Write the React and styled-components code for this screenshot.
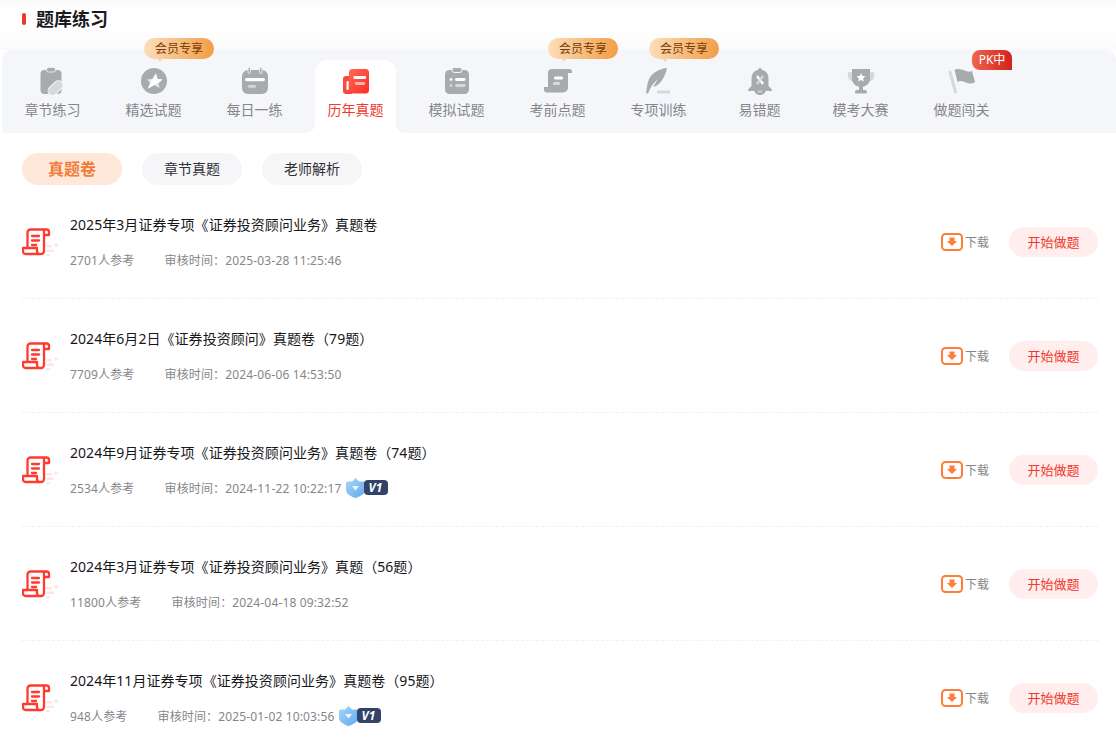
import React from "react";
import styled, { createGlobalStyle } from "styled-components";

const GlobalStyle = createGlobalStyle`
  html, body {
    margin: 0;
    padding: 0;
    background: #fff;
    font-family: "Noto Sans", "Noto Sans CJK SC", sans-serif;
  }
  * { box-sizing: border-box; }
`;

const G = "#a7abae";
const L = "#d6d8da";

const ClipIcon = () => (
  <svg width="28" height="28" viewBox="0 0 28 28">
    <rect x="1.5" y="3" width="21" height="24" rx="4" fill={G} />
    <rect x="7.5" y="0.5" width="9" height="4.5" rx="2" fill={G} stroke="#f5f6fa" strokeWidth="0.8" />
    <rect x="13" y="13" width="9" height="17" rx="4.5" transform="rotate(45 17.5 20)" fill={L} stroke="#f5f6fa" strokeWidth="1" />
  </svg>
);
const StarIcon = () => (
  <svg width="28" height="28" viewBox="0 0 28 28">
    <circle cx="14" cy="14" r="13" fill={G} />
    <path d="M16 6.5 L17.5 12 L22.5 12.5 L18.5 16.5 L19.5 21 L14.5 18 L8 21.5 L10 15.5 L7 12.5 L12.5 12 Z" fill="#e8e9eb" />
    <path d="M16 6.5 L17.5 12 L22.5 12.5 L14.5 18 L8 21.5 L12.5 12 Z" fill="#fff" />
  </svg>
);
const CalIcon = () => (
  <svg width="28" height="28" viewBox="0 0 28 28">
    <rect x="1" y="3" width="26" height="24" rx="6" fill={G} />
    <rect x="7" y="0.5" width="2.4" height="6" rx="1.2" fill={G} stroke="#f5f6fa" strokeWidth="0.8" />
    <rect x="18.6" y="0.5" width="2.4" height="6" rx="1.2" fill={G} stroke="#f5f6fa" strokeWidth="0.8" />
    <rect x="4" y="11" width="20" height="3.2" rx="1.6" fill="#fff" />
    <rect x="7" y="18" width="8" height="2.8" rx="1.4" fill={L} />
  </svg>
);
const BookIcon = () => (
  <svg width="26" height="25" viewBox="0 0 26 25">
    <defs>
      <linearGradient id="bookGrad" x1="0" y1="0" x2="1" y2="1">
        <stop offset="0" stopColor="#ff6a55" />
        <stop offset="1" stopColor="#ff2b24" />
      </linearGradient>
    </defs>
    <path d="M7 7 H3 a3 3 0 0 0 -3 3 V22 a3 3 0 0 0 3 3 H9 V7 Z" fill="#fa4a40" />
    <rect x="3.5" y="12" width="2.2" height="9" rx="1.1" fill="#fff" />
    <rect x="6" y="0" width="20" height="24.5" rx="3.5" fill="url(#bookGrad)" />
    <rect x="10.5" y="7" width="12.5" height="3" rx="1" fill="#fff" />
    <rect x="12" y="13" width="10" height="3" rx="1" fill="#ffb3ac" />
  </svg>
);
const TestIcon = () => (
  <svg width="28" height="28" viewBox="0 0 28 28">
    <rect x="2" y="3" width="24" height="24" rx="4.5" fill={G} />
    <rect x="9" y="0.5" width="10" height="5" rx="2.2" fill={G} stroke="#f5f6fa" strokeWidth="1" />
    <circle cx="8" cy="12.5" r="1.4" fill="#fff" />
    <rect x="12" y="11" width="10.5" height="3" rx="1.4" fill="#fff" />
    <circle cx="8" cy="18.5" r="1.4" fill={L} />
    <rect x="12" y="17" width="10.5" height="3" rx="1.4" fill={L} />
  </svg>
);
const ScrollIcon = () => (
  <svg width="28" height="24" viewBox="0 0 28 24">
    <path d="M4 4 a4 4 0 0 1 4 -4 H25 a3 3 0 0 1 3 3 V4 H24 V18.5 a5 5 0 0 1 -5 5 H3 a3 3 0 0 1 -3 -3 V18 H4 Z" fill={G} />
    <rect x="10" y="7.5" width="9" height="3" rx="1.2" fill="#fff" />
    <rect x="9" y="13" width="7" height="3" rx="1.2" fill={L} />
  </svg>
);
const QuillIcon = () => (
  <svg width="26" height="26" viewBox="0 0 26 26">
    <path d="M21 0 C12 1 4 6 2 14 C1 18 0.5 22 0 25 L2 25.5 C4 20 7 15 12 11 L7 19 C13 18 19 10 21 0 Z" fill={G} />
    <rect x="11" y="22.5" width="13" height="3" rx="0.5" fill={L} />
  </svg>
);
const BellIcon = () => (
  <svg width="26" height="28" viewBox="0 0 26 28">
    <path d="M13 0.5 L15.5 3 C19.5 4 21.5 7.5 21.5 12 V19 L25 22.5 a1 1 0 0 1 -1 1.5 H18.5 a5.5 4 0 0 1 -11 0 H2 a1 1 0 0 1 -1 -1.5 L4.5 19 V12 C4.5 7.5 6.5 4 10.5 3 Z" fill={G} />
    <path d="M10 9 L16 17" stroke="#fff" strokeWidth="2.4" />
    <path d="M16 9 L10 17" stroke={L} strokeWidth="2.4" />
    <ellipse cx="13" cy="24.6" rx="2.6" ry="1.4" fill="#c7c9cc" />
  </svg>
);
const TrophyIcon = () => (
  <svg width="28" height="26" viewBox="0 0 28 26">
    <path d="M5 4 H1 C0 10 2 13 7 14 Z M23 4 H27 C28 10 26 13 21 14 Z" fill={L} />
    <path d="M5 1 H23 V11 C23 16 18 19 14 19 C10 19 5 16 5 11 Z" fill={G} />
    <rect x="12" y="18" width="4" height="4.5" fill={G} />
    <rect x="8" y="22" width="12" height="3.5" rx="1.6" fill={G} />
    <path d="M14 5 L15.3 8 L18.5 8.3 L16.1 10.4 L16.8 13.6 L14 11.9 L11.2 13.6 L11.9 10.4 L9.5 8.3 L12.7 8 Z" fill="#fff" />
  </svg>
);
const FlagIcon = () => (
  <svg width="28" height="26" viewBox="0 0 28 26">
    <path d="M2 4 L7.5 24" stroke={L} strokeWidth="3" strokeLinecap="round" />
    <path d="M6.5 1.5 C11 0 15 1.5 18 3 C20.5 4 22 4 24 3 L27 14 C24 16 21 16 18 14.5 C15 13 12 12.5 9.5 14 Z" fill={G} />
  </svg>
);
const PaperIcon = () => (
  <svg width="36" height="30" viewBox="0 0 36 30">
    <rect x="24" y="17" width="6" height="2.6" rx="1.3" fill="#fde6e3" />
    <circle cx="34" cy="17" r="1.8" fill="#fde6e3" />
    <rect x="24" y="21.5" width="8" height="2.6" rx="1.3" fill="#fde6e3" />
    <rect x="24" y="26" width="4" height="2.4" rx="1.2" fill="#fde6e3" />
    <g fill="none" stroke="#ff3a2e" strokeWidth="2.3" strokeLinejoin="round" strokeLinecap="round">
      <path d="M5.5 19.5 V4.5 a3 3 0 0 1 3 -3 H24.5 a2.5 2.5 0 0 1 2.5 2.5 V7 H22 V23 a3 3 0 0 1 -3 3 H3.5 a2.5 2.5 0 0 1 -2.5 -2.5 V20 H15 V23 a3 3 0 0 0 3 3" />
      <path d="M22 6 V2" />
      <path d="M10 8 H17 M10 12.5 H17 M10 17 H14" />
    </g>
  </svg>
);
const DownIcon = () => (
  <svg width="22" height="18" viewBox="0 0 22 18">
    <rect x="1" y="1" width="20" height="16" rx="3.5" fill="none" stroke="#ff7d38" strokeWidth="2" />
    <path d="M8.5 4.5 H13.5 V8 H16 L11 13 L6 8 H8.5 Z" fill="#ff7d38" />
  </svg>
);
const ShieldIcon = () => (
  <svg width="19" height="20" viewBox="0 0 19 20">
    <defs>
      <linearGradient id="shieldGrad" x1="0" y1="0" x2="1" y2="1">
        <stop offset="0" stopColor="#a9d6f8" />
        <stop offset="1" stopColor="#5ea9ee" />
      </linearGradient>
    </defs>
    <path d="M9.5 0 L13 3.5 H17 a2 2 0 0 1 2 2 V12 C19 16 14 18.5 9.5 20 C5 18.5 0 16 0 12 V5.5 a2 2 0 0 1 2 -2 H6 Z" fill="url(#shieldGrad)" />
    <path d="M6 8 H13 L9.5 12.5 Z" fill="#eef7fe" />
  </svg>
);

const Page = styled.div`
  width: 1116px;
  height: 748px;
  overflow: hidden;
  background: #fff;
`;
const Header = styled.div`
  height: 50px;
  background: linear-gradient(#f8f8f9 0, #fff 10px, #fff 28px, #fafafb 50px);
  padding: 8px 0 0 22px;
  display: flex;
  align-items: flex-start;
  gap: 10px;
`;
const Marker = styled.i`
  display: block;
  width: 4px;
  height: 12px;
  margin-top: 5px;
  border-radius: 2px;
  background: #e8392d;
`;
const Heading = styled.h1`
  margin: 0;
  font-size: 18px;
  line-height: 22px;
  font-weight: 700;
  color: #1b1b1f;
`;
const TabBar = styled.div`
  margin-left: 2px;
  height: 83px;
  padding: 0 0 0 10px;
  display: flex;
  gap: 20px;
  background: #f5f6fa;
  border-radius: 10px 10px 0 0;
`;
const Tab = styled.div`
  position: relative;
  width: 81px;
  margin-top: 10px;
  padding-top: 7px;
  display: flex;
  flex-direction: column;
  align-items: center;
  border-radius: 12px 12px 0 0;
  background: ${(p) => (p.$active ? "#fff" : "transparent")};
  ${(p) =>
    p.$active &&
    `
    &::before, &::after {
      content: "";
      position: absolute;
      bottom: 0;
      width: 10px;
      height: 10px;
    }
    &::before {
      left: -10px;
      background: radial-gradient(circle at 0 0, transparent 10px, #fff 10.5px);
    }
    &::after {
      right: -10px;
      background: radial-gradient(circle at 100% 0, transparent 10px, #fff 10.5px);
    }
  `}
`;
const IconBox = styled.div`
  height: 28px;
  display: flex;
  align-items: center;
  justify-content: center;
`;
const TabLabel = styled.span`
  margin-top: 4px;
  font-size: 14px;
  line-height: 22px;
  color: ${(p) => (p.$active ? "#f03a2e" : "#85868a")};
`;
const VipTag = styled.span`
  position: absolute;
  top: -22px;
  left: 31px;
  width: 70px;
  height: 21px;
  border-radius: 11px;
  background: linear-gradient(100deg, #fde0bd, #f19c43);
  font-size: 12px;
  line-height: 21px;
  text-align: center;
  color: #7a3a08;
  &::after {
    content: "";
    position: absolute;
    left: 13px;
    bottom: -3px;
    border-left: 3px solid transparent;
    border-right: 3px solid transparent;
    border-top: 4px solid #fbd6a8;
  }
`;
const PkTag = styled.span`
  position: absolute;
  top: -10px;
  left: 51px;
  width: 40px;
  height: 20px;
  border-radius: 8px 8px 0 8px;
  background: linear-gradient(90deg, #f06650, #d3211a);
  font-size: 12px;
  line-height: 20px;
  text-align: center;
  color: #fff;
`;
const Filters = styled.div`
  display: flex;
  gap: 20px;
  padding: 20px 22px 0;
`;
const Pill = styled.div`
  width: 100px;
  height: 32px;
  border-radius: 16px;
  text-align: center;
  line-height: 32px;
  font-size: ${(p) => (p.$active ? "16px" : "14px")};
  font-weight: ${(p) => (p.$active ? 600 : 400)};
  color: ${(p) => (p.$active ? "#ee7d3c" : "#303135")};
  background: ${(p) => (p.$active ? "#ffe8d9" : "#f6f6f8")};
`;
const List = styled.div`
  padding: 0 18px 0 22px;
`;
const Row = styled.div`
  height: 114px;
  display: flex;
  align-items: center;
  border-bottom: 1px dashed #f0f0f2;
`;
const PaperSlot = styled.div`
  display: flex;
  margin-top: 2px;
`;
const Info = styled.div`
  flex: 1;
  padding-left: 12px;
  margin-top: 1px;
`;
const Title = styled.div`
  font-size: 14px;
  line-height: 22px;
  letter-spacing: 0.05px;
  color: #17171a;
`;
const Meta = styled.div`
  margin-top: 13px;
  height: 22px;
  display: flex;
  align-items: center;
  font-size: 12px;
  letter-spacing: 0.15px;
  color: #85868a;
`;
const Time = styled.span`
  margin-left: 30px;
`;
const Badge = styled.span`
  display: inline-flex;
  align-items: center;
  margin-left: 4px;
`;
const Level = styled.span`
  width: 24px;
  height: 15px;
  margin-left: -1px;
  border-radius: 4px;
  background: #324268;
  color: #fff;
  font-size: 12px;
  font-weight: 700;
  font-style: italic;
  line-height: 15px;
  text-align: center;
`;
const Download = styled.div`
  display: flex;
  align-items: center;
  gap: 2px;
  font-size: 12px;
  color: #85868a;
`;
const StartButton = styled.div`
  width: 89px;
  height: 30px;
  margin-left: 20px;
  border-radius: 15px;
  background: #ffeeed;
  color: #f03a2e;
  font-size: 13px;
  line-height: 30px;
  text-align: center;
`;

const tabs = [
  { label: "章节练习", icon: <ClipIcon /> },
  { label: "精选试题", icon: <StarIcon />, vip: true },
  { label: "每日一练", icon: <CalIcon /> },
  { label: "历年真题", icon: <BookIcon />, active: true },
  { label: "模拟试题", icon: <TestIcon /> },
  { label: "考前点题", icon: <ScrollIcon />, vip: true },
  { label: "专项训练", icon: <QuillIcon />, vip: true },
  { label: "易错题", icon: <BellIcon /> },
  { label: "模考大赛", icon: <TrophyIcon /> },
  { label: "做题闯关", icon: <FlagIcon />, pk: true },
];

const papers = [
  { title: "2025年3月证券专项《证券投资顾问业务》真题卷", count: "2701人参考", time: "2025-03-28 11:25:46" },
  { title: "2024年6月2日《证券投资顾问》真题卷（79题）", count: "7709人参考", time: "2024-06-06 14:53:50" },
  { title: "2024年9月证券专项《证券投资顾问业务》真题卷（74题）", count: "2534人参考", time: "2024-11-22 10:22:17", badge: true },
  { title: "2024年3月证券专项《证券投资顾问业务》真题（56题）", count: "11800人参考", time: "2024-04-18 09:32:52" },
  { title: "2024年11月证券专项《证券投资顾问业务》真题卷（95题）", count: "948人参考", time: "2025-01-02 10:03:56", badge: true },
];

export default function App() {
  return (
    <Page>
      <GlobalStyle />
      <Header>
        <Marker />
        <Heading>题库练习</Heading>
      </Header>
      <TabBar>
        {tabs.map((t) => (
          <Tab key={t.label} $active={t.active}>
            {t.vip && <VipTag>会员专享</VipTag>}
            {t.pk && <PkTag>PK中</PkTag>}
            <IconBox>{t.icon}</IconBox>
            <TabLabel $active={t.active}>{t.label}</TabLabel>
          </Tab>
        ))}
      </TabBar>
      <Filters>
        <Pill $active>真题卷</Pill>
        <Pill>章节真题</Pill>
        <Pill>老师解析</Pill>
      </Filters>
      <List>
        {papers.map((p) => (
          <Row key={p.title}>
            <PaperSlot>
              <PaperIcon />
            </PaperSlot>
            <Info>
              <Title>{p.title}</Title>
              <Meta>
                <span>{p.count}</span>
                <Time>审核时间：{p.time}</Time>
                {p.badge && (
                  <Badge>
                    <ShieldIcon />
                    <Level>V1</Level>
                  </Badge>
                )}
              </Meta>
            </Info>
            <Download>
              <DownIcon />
              下载
            </Download>
            <StartButton>开始做题</StartButton>
          </Row>
        ))}
      </List>
    </Page>
  );
}
